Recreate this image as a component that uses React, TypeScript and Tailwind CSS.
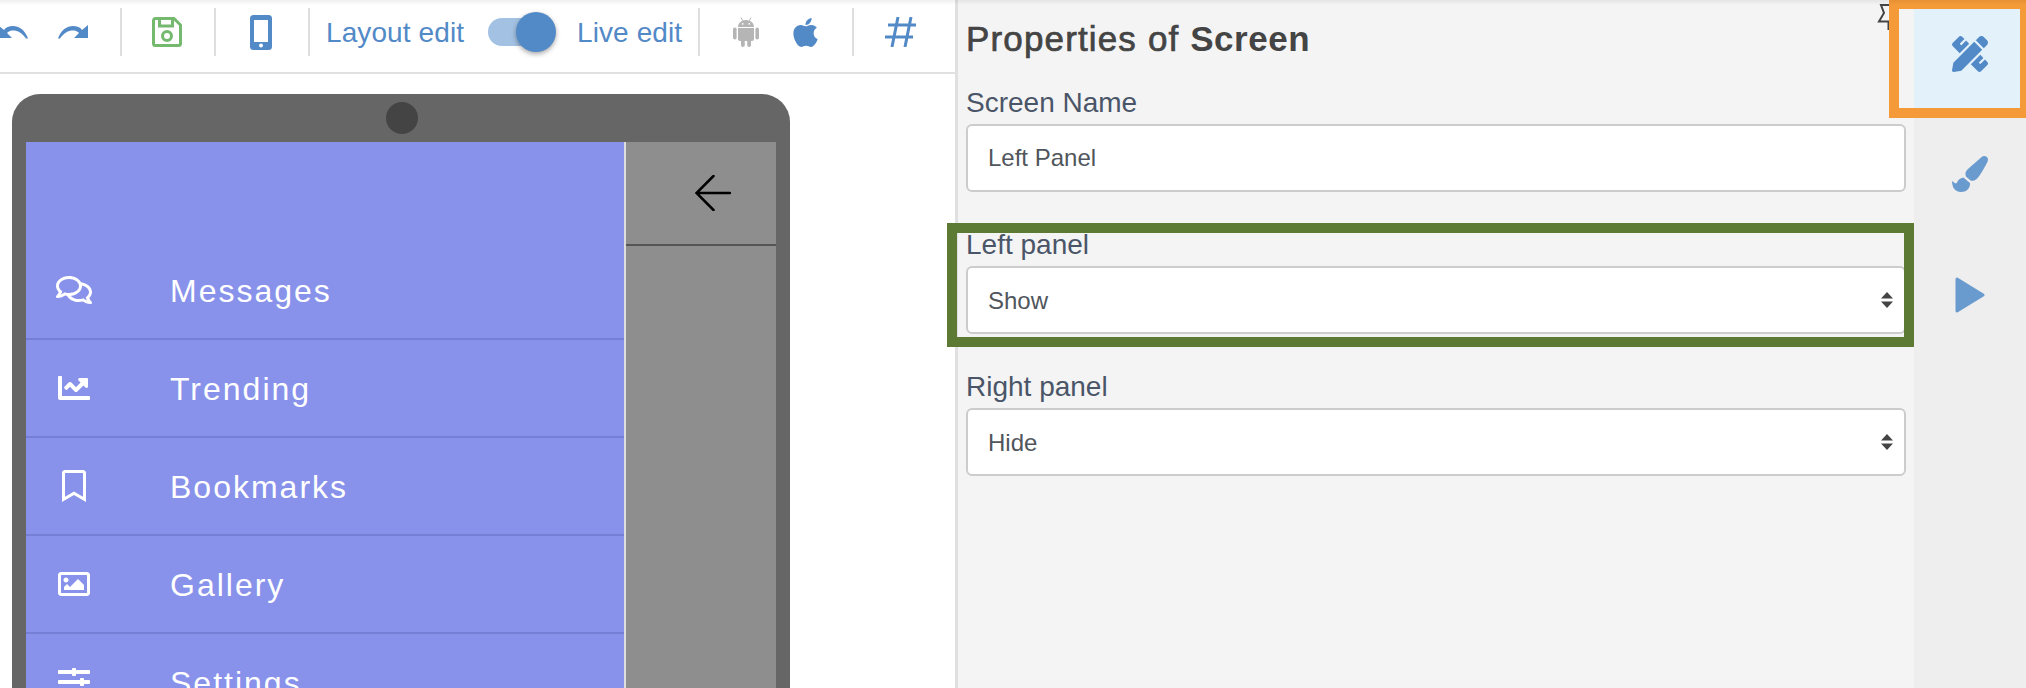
import React from "react";
import { FaApple, FaChartLine, FaPaintBrush, FaPencilRuler, FaRegBookmark, FaRegComments, FaRegImage, FaSlidersH } from "react-icons/fa";

const sans = "font-['Liberation_Sans',Arial,sans-serif]";

function Sep() {
  return <div className="w-[2px] h-[48px] bg-[#dedede] shrink-0" />;
}

function Curved({ flip }: { flip?: boolean }) {
  return (
    <svg width="30" height="14" viewBox="0 0 30 14" className={flip ? "-scale-x-100" : ""}>
      <path fill="#5289c7" d="M0 13.5 C3 5 9 1 15 1 C19 1 22 2 24 5 L30 0 V13 H16 L21 8 C19 6 17 5.5 15 5.5 C10 5.5 6 8 2 13.5 Z" />
    </svg>
  );
}

function Android() {
  return (
    <svg width="26" height="30" viewBox="0 0 26 30" fill="#b5b5b5">
      <path d="M5 10 C5 6 8.5 3 13 3 C17.5 3 21 6 21 10 Z" />
      <path d="M8 0.5 L9.8 3.8 M18 0.5 L16.2 3.8" stroke="#b5b5b5" strokeWidth="1" />
      <circle cx="9.7" cy="6.8" r="0.9" fill="#fff" />
      <circle cx="16.3" cy="6.8" r="0.9" fill="#fff" />
      <path d="M5 11 H21 V22 A2 2 0 0 1 19 24 H7 A2 2 0 0 1 5 22 Z" />
      <rect x="0" y="10.5" width="3.6" height="12" rx="1.8" />
      <rect x="22.4" y="10.5" width="3.6" height="12" rx="1.8" />
      <rect x="8" y="22" width="3.8" height="8" rx="1.9" />
      <rect x="14.2" y="22" width="3.8" height="8" rx="1.9" />
    </svg>
  );
}

function Row({ icon, label, last }: { icon: React.ReactNode; label: string; last?: boolean }) {
  return (
    <div className={`flex items-center h-[98px] shrink-0 border-b-2 ${last ? "border-transparent" : "border-[#767fd3]"}`}>
      <div className="w-[96px] flex justify-center text-white shrink-0">{icon}</div>
      <div className="ml-[48px] pt-[2px] text-[32px] tracking-[2px] text-white">{label}</div>
    </div>
  );
}

function Select({ value }: { value: string }) {
  return (
    <div className="h-[68px] bg-white border-2 border-[#cccccc] rounded-[6px] flex items-center justify-between pl-[20px] pr-[11px] text-[24px] text-[#50565c]">
      <span className="pt-[2px]">{value}</span>
      <svg width="12" height="16" viewBox="0 0 12 16">
        <path fill="#444" d="M6 0 L12 6.5 H0 Z M0 9.5 H12 L6 16 Z" />
      </svg>
    </div>
  );
}

export default function App() {
  return (
    <div className={`relative w-[2026px] h-[688px] overflow-hidden flex bg-white ${sans}`}>
      <div className="w-[955px] shrink-0 flex flex-col">
        <div className="h-[74px] shrink-0 border-b-2 border-[#e0e0e0] flex items-center pb-[8px]">
          <div className="w-[120px] flex items-center gap-[30px] shrink-0">
            <div className="-ml-[2px]"><Curved flip /></div>
            <Curved />
          </div>
          <Sep />
          <div className="w-[92px] flex justify-center shrink-0 pr-[2px]">
            <svg width="30" height="30" viewBox="0 0 30 30" fill="none" stroke="#74b96e" strokeWidth="3">
              <path d="M3.5 1.5 H22 L28.5 8 V26.5 A2 2 0 0 1 26.5 28.5 H3.5 A2 2 0 0 1 1.5 26.5 V3.5 A2 2 0 0 1 3.5 1.5 Z" strokeLinejoin="round" />
              <path d="M7.5 2 V9 H20.5 V2" />
              <circle cx="15" cy="19" r="4.5" />
            </svg>
          </div>
          <Sep />
          <div className="w-[92px] flex justify-center shrink-0 pr-[2px]">
            <svg width="22" height="35" viewBox="0 0 22 35">
              <rect width="22" height="35" rx="3.5" fill="#5289c7" />
              <rect x="4" y="5" width="14" height="22" fill="#fff" />
              <circle cx="11" cy="30.5" r="2" fill="#fff" />
            </svg>
          </div>
          <Sep />
          <div className="w-[388px] flex items-center shrink-0 pl-[16px] text-[#5289c7] text-[28px] tracking-[0.1px]">
            <span className="w-[162px] shrink-0 pt-[1px]">Layout edit</span>
            <div className="relative w-[64px] h-[28px] rounded-full bg-[#a3c2e3] shrink-0">
              <div className="absolute right-[-4px] top-[-6px] w-[40px] h-[40px] rounded-full bg-[#5289c7] shadow-[0_2px_5px_rgba(0,0,0,0.35)]" />
            </div>
            <span className="ml-[25px] pt-[1px]">Live edit</span>
          </div>
          <Sep />
          <div className="w-[152px] flex items-center justify-center gap-[30px] shrink-0 pl-[3px]">
            <Android />
            <FaApple size={33} color="#5289c7" />
          </div>
          <Sep />
          <div className="flex-1 flex justify-center pr-[8px]">
            <svg width="31" height="30" viewBox="0 0 31 30" fill="none" stroke="#5289c7" strokeWidth="3">
              <path d="M13 0 L7 30 M26 0 L20 30 M3 8 H31 M0 20 H28" />
            </svg>
          </div>
        </div>
        <div className="flex-1 min-h-0 pl-[12px] pt-[20px]">
          <div className="w-[778px] h-[700px] bg-[#666666] rounded-t-[28px] relative pt-[48px] px-[14px]">
            <div className="absolute left-[374px] top-[8px] w-[32px] h-[32px] rounded-full bg-[#444444]" />
            <div className="flex h-[600px]">
              <div className="w-[598px] shrink-0 bg-[#8892ea] pt-[100px] flex flex-col">
                <Row icon={<FaRegComments size={36} />} label="Messages" />
                <Row icon={<FaChartLine size={32} />} label="Trending" />
                <Row icon={<FaRegBookmark size={32} />} label="Bookmarks" />
                <Row icon={<FaRegImage size={32} />} label="Gallery" />
                <Row icon={<FaSlidersH size={32} />} label="Settings" last />
              </div>
              <div className="w-[2px] shrink-0 bg-[#dddddd]" />
              <div className="flex-1 bg-[#8e8e8f]">
                <div className="h-[104px] border-b-2 border-[#555555] flex items-center justify-center pl-[24px]">
                  <svg width="36" height="36" viewBox="0 0 36 36" fill="none" stroke="#000" strokeWidth="2.5" strokeLinecap="round">
                    <path d="M35 18 H1.5 M18.5 1 L1.5 18 L18.5 35" />
                  </svg>
                </div>
              </div>
            </div>
          </div>
        </div>
      </div>
      <div className="w-[3px] shrink-0 bg-[#e0e0e0]" />
      <div className="w-[956px] shrink-0 bg-[#f4f4f4] pl-[8px] pr-[8px] pt-[20px]">
        <h1 className="text-[35px] leading-[38px] text-[#444444] font-bold tracking-[0.5px]">
          <span className="font-normal tracking-[1.15px] [-webkit-text-stroke:0.7px_#444444]">Properties of </span>Screen
        </h1>
        <div className="mt-[30px] text-[28px] leading-[30px] text-[#4a5568]">Screen Name</div>
        <div className="mt-[6px] h-[68px] bg-white border-2 border-[#cccccc] rounded-[6px] flex items-center pl-[20px] text-[24px] text-[#50565c]">Left Panel</div>
        <div className="mt-[38px] text-[28px] leading-[30px] text-[#4a5568]">Left panel</div>
        <div className="mt-[6px]"><Select value="Show" /></div>
        <div className="mt-[38px] text-[28px] leading-[30px] text-[#4a5568]">Right panel</div>
        <div className="mt-[6px]"><Select value="Hide" /></div>
      </div>
      <div className="flex-1 bg-[#eeeeee] flex flex-col items-center">
        <div className="h-[108px] w-full bg-[#e3f1fb] flex items-center justify-center shrink-0">
          <FaPencilRuler size={36} color="#5289c7" />
        </div>
        <div className="h-[132px] flex items-center justify-center shrink-0">
          <FaPaintBrush size={36} color="#6a9bcf" />
        </div>
        <div className="h-[110px] flex items-center justify-center shrink-0">
          <svg width="30" height="36" viewBox="0 0 30 36">
            <path fill="#6a9bcf" stroke="#6a9bcf" strokeWidth="3" strokeLinejoin="round" d="M2 2 L28 18 L2 34 Z" />
          </svg>
        </div>
      </div>
      <svg className="absolute left-[1876px] top-[2px]" width="14" height="30" viewBox="0 0 14 30" fill="none" stroke="#444" strokeWidth="2">
        <path d="M13 3 H5 L8 11 L3 19.5 H13 M12.5 19.5 V28" />
      </svg>
      <div className="absolute left-[947px] top-[223px] w-[967px] h-[124px] border-[10px] border-[#5c7a34] pointer-events-none" />
      <div className="absolute left-[1889px] top-[-1px] w-[137px] h-[119px] border-[10px] border-r-[6px] border-[#f49a38] pointer-events-none" />
      <div className="absolute left-0 top-0 w-full h-[5px] bg-gradient-to-b from-[#00000010] to-transparent pointer-events-none" />
    </div>
  );
}
